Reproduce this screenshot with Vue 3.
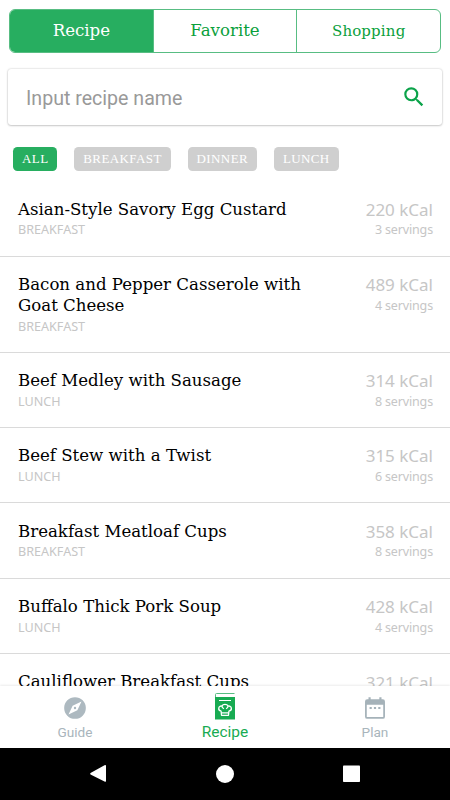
<template>
    <div class="screen">
        <div class="segments">
            <button v-for="tab in tabs" :key="tab" class="segment"
                :class="{ active: tab === activeTab, small: tab === 'Shopping' }" @click="activeTab = tab">{{ tab }}</button>
        </div>

        <label class="search">
            <input v-model="query" type="text" placeholder="Input recipe name">
            <svg width="26" height="26" viewBox="0 0 24 24" fill="#0ba34a">
                <path
                    d="M15.5 14h-.79l-.28-.27A6.47 6.47 0 0 0 16 9.5 6.5 6.5 0 1 0 9.5 16c1.61 0 3.09-.59 4.23-1.57l.27.28v.79l5 4.99L20.49 19l-4.99-5zm-6 0a4.5 4.5 0 1 1 0-9 4.5 4.5 0 0 1 0 9z" />
            </svg>
        </label>

        <div class="tags">
            <button v-for="tag in tags" :key="tag" class="tag" :class="{ active: tag === activeTag }"
                @click="activeTag = tag">{{ tag }}</button>
        </div>

        <ul class="recipes">
            <li v-for="item in shown" :key="item.title" class="recipe">
                <div class="info">
                    <div class="title">{{ item.title }}</div>
                    <div class="meal">{{ item.meal }}</div>
                </div>
                <div class="facts">
                    <div class="kcal">{{ item.kcal }} kCal</div>
                    <div class="servings">{{ item.servings }} servings</div>
                </div>
            </li>
        </ul>

        <nav class="bottom-nav">
            <a class="nav-item">
                <svg width="26" height="26" viewBox="0 0 24 24" fill="#adb9c0">
                    <path
                        d="M12 10.9a1.1 1.1 0 1 0 0 2.2 1.1 1.1 0 0 0 0-2.2zM12 2a10 10 0 1 0 0 20 10 10 0 0 0 0-20zm2.19 12.19L6 18l3.81-8.19L18 6l-3.81 8.19z" />
                </svg>
                <span>Guide</span>
            </a>
            <a class="nav-item current">
                <svg width="20" height="27" viewBox="0 0 20 27" fill="none">
                    <path d="M.5 5V1.5Q.5 .5 1.5 .5H19.5" stroke="#58bd83" />
                    <path d="M0 4h20v22.5H0z" fill="#18ab52" />
                    <path d="M4 7.5h12" stroke="#fff" />
                    <path
                        d="M6.5 22.3l-.4-4.2c-3.7-.8-2.8-5.8.9-5 .9-2.3 5.1-2.3 6 0 3.8-.8 4.8 4.2.9 5l-.4 4.2zM6.6 19.8h6.8M7 13.1c.1 1.5.9 2.4 2 2.6M13 13.1c-.1 1.5-.9 2.4-2 2.6"
                        stroke="#fff" stroke-width="1.3" stroke-linejoin="round" />
                </svg>
                <span>Recipe</span>
            </a>
            <a class="nav-item">
                <svg width="26" height="26" viewBox="0 0 24 24" fill="#a5b2b9">
                    <path
                        d="M9 11H7v2h2v-2zm4 0h-2v2h2v-2zm4 0h-2v2h2v-2zm2-7h-1V2h-2v2H8V2H6v2H4.8a2 2 0 0 0-2 2v14a2 2 0 0 0 2 2h14.4a2 2 0 0 0 2-2V6a2 2 0 0 0-2-2zm.4 16.4H4.4V9h15.2v11.4z" />
                </svg>
                <span>Plan</span>
            </a>
        </nav>

        <div class="system-bar">
            <svg width="450" height="52" viewBox="0 0 450 52" fill="#fff">
                <path d="M90.5 25 L104.5 17.3 Q106 16.5 106 18 V33 Q106 34.2 104.5 33.4 L90.5 26.5 Q89.8 25.8 90.5 25z" />
                <circle cx="225" cy="26" r="9" />
                <rect x="343" y="17.5" width="17" height="16.5" rx=".8" />
            </svg>
        </div>
    </div>
</template>

<script setup>
import { computed, ref } from 'vue'

const tabs = ['Recipe', 'Favorite', 'Shopping']
const tags = ['ALL', 'BREAKFAST', 'DINNER', 'LUNCH']

const activeTab = ref('Recipe')
const activeTag = ref('ALL')
const query = ref('')

const recipes = [
    { title: 'Asian-Style Savory Egg Custard', meal: 'BREAKFAST', kcal: 220, servings: 3 },
    { title: 'Bacon and Pepper Casserole with Goat Cheese', meal: 'BREAKFAST', kcal: 489, servings: 4 },
    { title: 'Beef Medley with Sausage', meal: 'LUNCH', kcal: 314, servings: 8 },
    { title: 'Beef Stew with a Twist', meal: 'LUNCH', kcal: 315, servings: 6 },
    { title: 'Breakfast Meatloaf Cups', meal: 'BREAKFAST', kcal: 358, servings: 8 },
    { title: 'Buffalo Thick Pork Soup', meal: 'LUNCH', kcal: 428, servings: 4 },
    { title: 'Cauliflower Breakfast Cups', meal: 'BREAKFAST', kcal: 321, servings: 4 },
]

const shown = computed(() => recipes.filter((r) =>
    (activeTag.value === 'ALL' || r.meal === activeTag.value) &&
    r.title.toLowerCase().includes(query.value.toLowerCase())
))
</script>

<style>
body {
    margin: 0;
    background: #fff;
}
</style>

<style scoped>
.screen {
    display: flex;
    flex-direction: column;
    width: 450px;
    height: 800px;
    overflow: hidden;
    background: #fff;
}

button {
    margin: 0;
    padding: 0;
    border: 0;
    background: none;
}

.segments {
    display: flex;
    flex: none;
    box-sizing: border-box;
    height: 44px;
    margin: 8.5px 9px 0;
    border: 1px solid #58bd83;
    border-radius: 6px;
    overflow: hidden;
}

.segment {
    flex: 1;
    color: #0ba03c;
    font: 16.6px/40px "DejaVu Serif", serif;
}

.segment + .segment {
    border-left: 1px solid #58bd83;
}

.segment.small {
    font-size: 15px;
    letter-spacing: .15px;
}

.segment.active {
    background: #27ae60;
    color: #fff;
}

.search {
    display: flex;
    flex: none;
    align-items: center;
    box-sizing: border-box;
    height: 56px;
    margin: 16.5px 8px 0;
    padding: 0 15px 0 18px;
    border-radius: 3px;
    box-shadow: 0 0 2px rgba(0, 0, 0, .25), 0 1px 2px rgba(0, 0, 0, .15);
}

.search input {
    flex: 1;
    min-width: 0;
    padding: 2px 0 0;
    border: 0;
    outline: 0;
    background: none;
    color: #333;
    font: 19.6px Roboto, sans-serif;
}

.search input::placeholder {
    color: #999;
}

.tags {
    display: flex;
    flex: none;
    gap: 16.8px;
    height: 24px;
    margin: 22px 13px 0;
}

.tag {
    padding: 0 9px;
    border-radius: 4.5px;
    background: #cfcfcf;
    color: #fff;
    font: 13px/24px "Liberation Serif", serif;
    letter-spacing: .4px;
}

.tag.active {
    background: #27ae60;
}

.recipes {
    flex: 1;
    min-height: 0;
    margin: 10.5px 0 0;
    padding: 0;
    overflow: hidden;
    list-style: none;
}

.recipe {
    display: flex;
    justify-content: space-between;
    box-sizing: border-box;
    min-height: 75.4px;
    padding: 18.2px 17px 15.4px 18px;
    border-bottom: 1px solid #dadada;
}

.info {
    width: 300px;
}

.title {
    color: #000;
    font: 16.6px/20.8px "DejaVu Serif", serif;
}

.meal {
    color: #c6c6c6;
    font: 12.6px/19.6px "Noto Sans", sans-serif;
}

.facts {
    margin-top: -.8px;
    color: #c6c6c6;
    font-family: "Noto Sans", sans-serif;
    text-align: right;
}

.kcal {
    font-size: 17px;
    line-height: 21.6px;
}

.servings {
    font-size: 12.5px;
    line-height: 19.8px;
    letter-spacing: -.15px;
}

.bottom-nav {
    position: relative;
    display: flex;
    flex: none;
    height: 62px;
    background: #fff;
    box-shadow: 0 -1px 2px rgba(0, 0, 0, .08);
}

.nav-item {
    display: flex;
    flex: 1;
    flex-direction: column;
    align-items: center;
    padding-top: 9px;
    color: #a9b5bc;
    font: 13.6px/20px Roboto, sans-serif;
}

.nav-item span {
    margin-top: 1px;
}

.nav-item.current {
    padding-top: 7px;
    color: #18ab52;
    font-size: 15.5px;
}

.nav-item.current span {
    margin-top: 2px;
}

.system-bar {
    flex: none;
    height: 52px;
    background: #000;
}

.system-bar svg {
    display: block;
}
</style>
